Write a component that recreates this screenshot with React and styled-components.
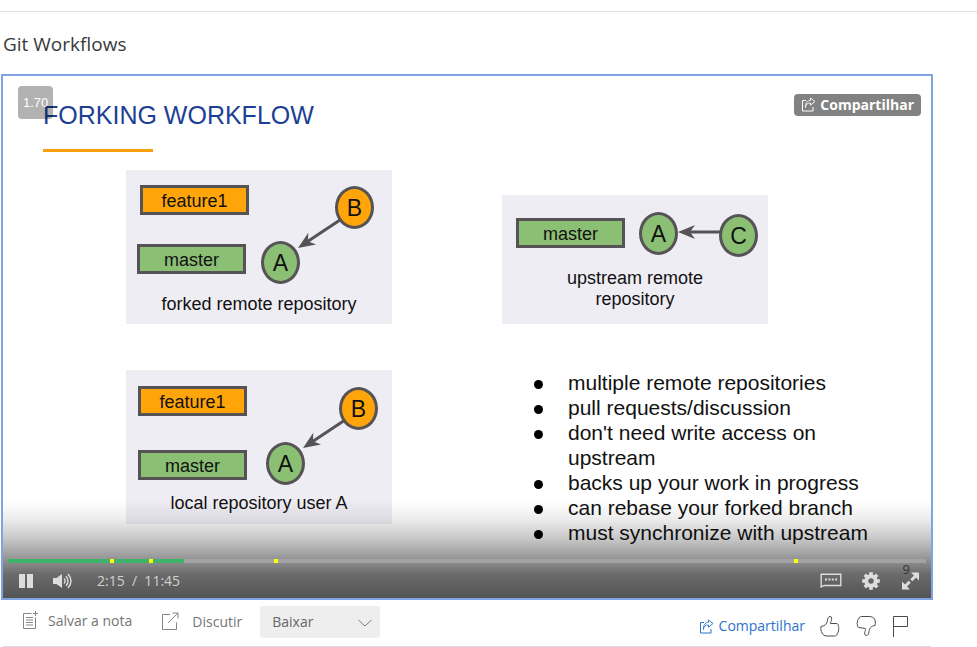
import React, { useState } from "react";
import styled, { createGlobalStyle } from "styled-components";

const GlobalStyle = createGlobalStyle`
  *, *::before, *::after { box-sizing: border-box; }
  body {
    margin: 0;
    background: #fff;
    color: #373a3c;
    font-family: "Open Sans", "Noto Sans", sans-serif;
    font-size: 14px;
  }
  button, select { font: inherit; color: inherit; }
`;

const Page = styled.main`
  margin-top: 11px;
  border-top: 1px solid #ddd;
`;

const Lecture = styled.section`
  margin: 0 44px 0 1px;
`;

const LectureTitle = styled.h1`
  margin: 0;
  padding: 18px 2px 16px;
  font-size: 19px;
  line-height: 28px;
  font-weight: 400;
`;

const Player = styled.div`
  position: relative;
  border: 2px solid #7fa4e0;
  background: #fff;
`;

const Slide = styled.article`
  min-height: 522px;
  padding: 24px 40px 0;
  font-family: "Liberation Sans", Arial, sans-serif;
  color: #111;
`;

const SlideTitle = styled.h2`
  margin: 0;
  font-size: 25px;
  line-height: 30px;
  font-weight: 400;
  color: #1c3f94;
`;

const SlideRule = styled.hr`
  width: 110px;
  height: 3px;
  margin: 19px 0 18px;
  border: 0;
  background: #fa9f0c;
`;

const SlideGrid = styled.div`
  display: grid;
  grid-template-columns: 266px minmax(266px, 380px);
  column-gap: 110px;
  row-gap: 46px;
  padding-left: 83px;
  align-items: start;
`;

const Diagram = styled.figure`
  position: relative;
  display: flex;
  flex-direction: column;
  justify-content: flex-end;
  align-self: ${(p) => p.$align || "start"};
  width: 266px;
  height: ${(p) => p.$height}px;
  margin: 0;
  padding-bottom: ${(p) => p.$pad}px;
  background: #efedf4;
`;

const Caption = styled.figcaption`
  padding: 0 30px;
  font-size: 18px;
  line-height: 21px;
  text-align: center;
`;

const fills = { orange: "#ffa50a", green: "#8bc074" };

const Node = styled.span`
  position: absolute;
  left: ${(p) => p.$x}px;
  top: ${(p) => p.$y}px;
  display: flex;
  align-items: center;
  justify-content: center;
  border: 3px solid #555356;
  background: ${(p) => fills[p.$fill]};
`;

const Branch = styled(Node)`
  width: 109px;
  height: 30px;
  padding-top: 2px;
  font-size: 18px;
`;

const Commit = styled(Node)`
  width: 39px;
  height: 43px;
  padding-top: 1px;
  border-radius: 50%;
  font-size: 23px;
`;

const ArrowLayer = styled.svg`
  position: absolute;
  inset: 0;
  width: 100%;
  height: 100%;
`;

const Points = styled.ul`
  margin: 0;
  padding: 0 0 0 66px;
  list-style: none;
  font-size: 21px;
  line-height: 25px;
`;

const Point = styled.li`
  display: flex;
  &::before {
    content: "";
    flex: none;
    width: 9px;
    height: 9px;
    margin: 10px 25px 0 -34px;
    border-radius: 50%;
    background: #000;
  }
`;

const SpeedBadge = styled.span`
  position: absolute;
  left: 15px;
  top: 10px;
  padding: 0 5px;
  border-radius: 4px;
  background: rgba(0, 0, 0, 0.3);
  color: #fff;
  font-family: "Liberation Sans", Arial, sans-serif;
  font-size: 13px;
  line-height: 33px;
`;

const ShareOverlay = styled.button`
  position: absolute;
  right: 10px;
  top: 18px;
  display: flex;
  align-items: center;
  gap: 4px;
  height: 22px;
  padding: 0 7px 2px;
  border: 0;
  border-radius: 4px;
  background: #828282;
  color: #fff;
  font-weight: 700;
`;

const Controls = styled.div`
  position: absolute;
  left: 0;
  right: 0;
  bottom: 0;
  padding: 59px 5px 0;
  height: 98px;
  color: #ddd;
  background: linear-gradient(
    to bottom,
    rgba(0, 0, 0, 0) 0,
    rgba(0, 0, 0, 0.08) 20px,
    rgba(0, 0, 0, 0.23) 40px,
    rgba(0, 0, 0, 0.42) 59px,
    rgba(0, 0, 0, 0.58) 74px,
    rgba(0, 0, 0, 0.67) 98px
  );
`;

const Timeline = styled.div`
  position: relative;
  height: 4px;
`;

const Seek = styled.input`
  display: block;
  width: 100%;
  height: 4px;
  margin: 0;
  appearance: none;
  cursor: pointer;
  background: linear-gradient(to right, #3db36b var(--played), #a3a3a3 var(--played));
  &::-webkit-slider-thumb { appearance: none; width: 4px; height: 4px; background: transparent; }
`;

const Bookmark = styled.span`
  position: absolute;
  top: 0;
  left: ${(p) => p.$at}%;
  width: 4px;
  height: 4px;
  background: #ff0;
`;

const ControlRow = styled.div`
  display: flex;
  align-items: center;
  height: 35px;
  padding: 0 6px 0 10px;
`;

const IconButton = styled.button`
  display: flex;
  align-items: center;
  justify-content: center;
  padding: 0;
  border: 0;
  background: none;
  cursor: pointer;
`;

const LeftControls = styled.div`
  display: flex;
  align-items: center;
  gap: 19px;
`;

const RightControls = styled.div`
  position: relative;
  display: flex;
  align-items: center;
  gap: 20px;
  margin-left: auto;
`;

const Time = styled.span`
  margin-left: 5px;
  color: #d0d0d0;
  white-space: pre;
`;

const Count = styled.span`
  position: absolute;
  right: 10px;
  top: -9px;
  color: #333;
  font-size: 13px;
  line-height: 14px;
`;

const Actions = styled.footer`
  display: flex;
  align-items: flex-start;
  justify-content: space-between;
  height: 47px;
  margin: 0 2px;
  border-bottom: 1px solid #ddd;
`;

const ActionGroup = styled.div`
  display: flex;
  padding: 6px 0 0 19px;
`;

const ActionButton = styled(IconButton)`
  height: ${(p) => p.$height}px;
  margin-right: ${(p) => p.$after}px;
  gap: ${(p) => p.$gap}px;
  color: #757575;
`;

const Download = styled.label`
  position: relative;
  color: #666;
`;

const DownloadSelect = styled.select`
  width: 120px;
  height: 32px;
  padding: 0 12px 2px;
  border: 0;
  border-radius: 2px;
  appearance: none;
  background: #eee;
`;

const Chevron = styled.svg`
  position: absolute;
  right: 8px;
  top: 13px;
  pointer-events: none;
`;

const Feedback = styled.div`
  display: flex;
  align-items: center;
  padding: 14px 21px 0 0;
  gap: 15px;
  color: #555;
`;

const ShareLink = styled.a`
  display: flex;
  align-items: center;
  gap: 5px;
  color: #2a73cc;
  text-decoration: none;
  line-height: 24px;
`;

function ShareIcon() {
  return (
    <svg width="15" height="15" viewBox="0 0 15 15" fill="none" stroke="currentColor" aria-hidden="true">
      <path d="M5 3.500H1.500v10.500h10.500V10" />
      <path d="M4.500 10.500c0-3 1.800-4.500 5-4.500v2.200l4.500-3.700L9.500 1v2.300C6 3.500 4.300 6 4.500 10.500Z" strokeWidth="0.9" />
    </svg>
  );
}

function Arrow({ from, to }) {
  const angle = (Math.atan2(to[1] - from[1], to[0] - from[0]) * 180) / Math.PI;
  return (
    <ArrowLayer aria-hidden="true">
      <line x1={from[0]} y1={from[1]} x2={to[0]} y2={to[1]} stroke="#555356" strokeWidth="3" strokeDasharray={`${Math.hypot(to[0] - from[0], to[1] - from[1]) - 7} 20`} />
      <path d="M0 0L-17-7L-12 0L-17 7Z" fill="#555356" transform={`translate(${to[0]} ${to[1]}) rotate(${angle})`} />
    </ArrowLayer>
  );
}

const points = [
  "multiple remote repositories",
  "pull requests/discussion",
  "don't need write access on upstream",
  "backs up your work in progress",
  "can rebase your forked branch",
  "must synchronize with upstream",
];

const bookmarks = [11.1, 15.4, 29, 85.6];
const duration = 705;

const clock = (s) => `${Math.floor(s / 60)}:${String(s % 60).padStart(2, "0")}`;

export default function App() {
  const [position, setPosition] = useState(135);

  return (
    <>
      <GlobalStyle />
      <Page>
        <Lecture>
          <LectureTitle>Git Workflows</LectureTitle>
          <Player>
            <Slide>
              <SlideTitle>FORKING WORKFLOW</SlideTitle>
              <SlideRule />
              <SlideGrid>
                <Diagram $height={154} $pad={9}>
                  <Arrow from={[214, 50]} to={[172, 78]} />
                  <Branch $x={14} $y={15} $fill="orange">feature1</Branch>
                  <Branch $x={11} $y={74} $fill="green">master</Branch>
                  <Commit $x={135} $y={71} $fill="green">A</Commit>
                  <Commit $x={209} $y={16} $fill="orange">B</Commit>
                  <Caption>forked remote repository</Caption>
                </Diagram>
                <Diagram $height={129} $pad={14} $align="end">
                  <Arrow from={[218, 37]} to={[176, 37]} />
                  <Branch $x={14} $y={23} $fill="green">master</Branch>
                  <Commit $x={137} $y={17} $fill="green">A</Commit>
                  <Commit $x={217} $y={19} $fill="green">C</Commit>
                  <Caption>upstream remote<br />repository</Caption>
                </Diagram>
                <Diagram $height={154} $pad={10}>
                  <Arrow from={[219, 50]} to={[177, 78]} />
                  <Branch $x={12} $y={16} $fill="orange">feature1</Branch>
                  <Branch $x={12} $y={80} $fill="green">master</Branch>
                  <Commit $x={140} $y={72} $fill="green">A</Commit>
                  <Commit $x={213} $y={17} $fill="orange">B</Commit>
                  <Caption>local repository user A</Caption>
                </Diagram>
                <Points>
                  {points.map((text) => <Point key={text}>{text}</Point>)}
                </Points>
              </SlideGrid>
            </Slide>

            <SpeedBadge>1.70</SpeedBadge>
            <ShareOverlay type="button"><ShareIcon />Compartilhar</ShareOverlay>

            <Controls>
              <Timeline>
                <Seek
                  type="range"
                  aria-label="Progresso"
                  min="0"
                  max={duration}
                  value={position}
                  onChange={(e) => setPosition(Number(e.target.value))}
                  style={{ "--played": `${(position / duration) * 100}%` }}
                />
                {bookmarks.map((at) => <Bookmark key={at} $at={at} />)}
              </Timeline>
              <ControlRow>
                <LeftControls>
                  <IconButton type="button" aria-label="Pausar">
                    <svg width="16" height="14" viewBox="0 0 16 14" fill="#ddd"><path d="M1 0h6v14H1zM9 0h6v14H9z" /></svg>
                  </IconButton>
                  <IconButton type="button" aria-label="Volume">
                    <svg width="20" height="18" viewBox="0 0 20 18" fill="none" stroke="#ddd" strokeWidth="1.4">
                      <path d="M0 6h3.500L9 2v14l-5.500-4H0Z" fill="#ddd" stroke="none" />
                      <path d="M11 6.500q2.200 2.500 0 5M13 4.300q4 4.700 0 9.400M15 2q6 7 0 14" />
                    </svg>
                  </IconButton>
                  <Time>{`${clock(position)}  /  ${clock(duration)}`}</Time>
                </LeftControls>
                <RightControls>
                  <IconButton type="button" aria-label="Legendas">
                    <svg width="22" height="15" viewBox="0 0 22 15" fill="none" stroke="#ddd" strokeWidth="1.400">
                      <path d="M1.200 14V1.200h19.600v11.300H4Z" />
                      <path d="M5 6.500h12.500" strokeWidth="2" strokeDasharray="2 1.400" />
                    </svg>
                  </IconButton>
                  <IconButton type="button" aria-label="Configurações">
                    <svg width="18" height="18" viewBox="-9 -9 18 18" fill="none" stroke="#ddd">
                      <circle r="4.700" strokeWidth="4" />
                      {[0, 45, 90, 135, 180, 225, 270, 315].map((a) => (
                        <path key={a} d="M0-5V-8.800" strokeWidth="3.600" transform={`rotate(${a})`} />
                      ))}
                    </svg>
                  </IconButton>
                  <IconButton type="button" aria-label="Tela cheia">
                    <svg width="20" height="20" viewBox="0 0 20 20" fill="#ddd" stroke="#ddd">
                      <path d="M11 1.500h8v8ZM2 10.500v8h8Z" stroke="none" />
                      <path d="M16 4.500l-4.700 4.700M9.700 10.800l-4.700 4.700" strokeWidth="3" />
                    </svg>
                  </IconButton>
                  <Count>9</Count>
                </RightControls>
              </ControlRow>
            </Controls>
          </Player>

          <Actions>
            <ActionGroup>
              <ActionButton type="button" $height={28} $gap={10} $after={29}>
                <svg width="16" height="18" viewBox="0 0 16 18" fill="none" stroke="#858585" aria-hidden="true">
                  <path d="M9.500 2.500h-8v15h12v-11M13.500 0v5M11 2.500h5M4 6.500h7M4 9h7M4 11.500h7M4 14h7" />
                </svg>
                Salvar a nota
              </ActionButton>
              <ActionButton type="button" $height={30} $gap={13} $after={18}>
                <svg width="18" height="18" viewBox="0 0 18 18" fill="none" stroke="#858585" aria-hidden="true">
                  <path d="M9 2.500H1.500v15h14v-7M7 11L17 1M11.500 1h5.500v5.500" />
                </svg>
                Discutir
              </ActionButton>
              <Download>
                <DownloadSelect aria-label="Baixar" defaultValue="baixar">
                  <option value="baixar">Baixar</option>
                </DownloadSelect>
                <Chevron width="14" height="8" viewBox="0 0 14 8" fill="none" stroke="#777" aria-hidden="true">
                  <path d="M0.500 1L7 7l6.500-6" />
                </Chevron>
              </Download>
            </ActionGroup>
            <Feedback>
              <ShareLink href="#compartilhar"><ShareIcon />Compartilhar</ShareLink>
              <IconButton type="button" aria-label="Gostei">
                <svg width="20" height="22" viewBox="0 0 20 22" fill="none" stroke="#4a4a4a">
                  <path d="M1 11.500C5 11 7 9 7.500 5.500 7.700 3 8.500 1.500 10 1.500c2.200 0 1.800 2.500 1.300 4-.5 1.500-.8 2-.8 3h5.500c2.500 0 2.800 2 2.300 3 .8 1.200.8 2.500 0 3.500.5 1.500 0 2.700-1 3.200 0 1.700-1 2.800-2.800 2.800H7c-2.500 0-4-1-5-3S.5 13.500 1 11.500Z" />
                </svg>
              </IconButton>
              <IconButton type="button" aria-label="Não gostei">
                <svg width="22" height="22" viewBox="0 0 22 22" fill="none" stroke="#4a4a4a">
                  <path d="M20 10.500C16 11 14.500 13 14 16.500c-.2 2.500-1 4-2.500 4-2.200 0-2-2.500-1.500-4 .5-1.500.8-2 .3-3L5 12.700c-2.500 0-3-1.700-2.300-2.700-1-1-.8-2.200 0-3C2 5.500 2.800 4.500 3.800 4 4 2.300 5 1.500 6.500 1.500h7.500c2.500 0 4.500.8 5.500 2.500s1 4.500.5 6.500Z" />
                </svg>
              </IconButton>
              <IconButton type="button" aria-label="Sinalizar">
                <svg width="18" height="22" viewBox="0 0 18 22" fill="none" stroke="#4a4a4a">
                  <path d="M1.500 22V1.500h14v10h-14" />
                </svg>
              </IconButton>
            </Feedback>
          </Actions>
        </Lecture>
      </Page>
    </>
  );
}
